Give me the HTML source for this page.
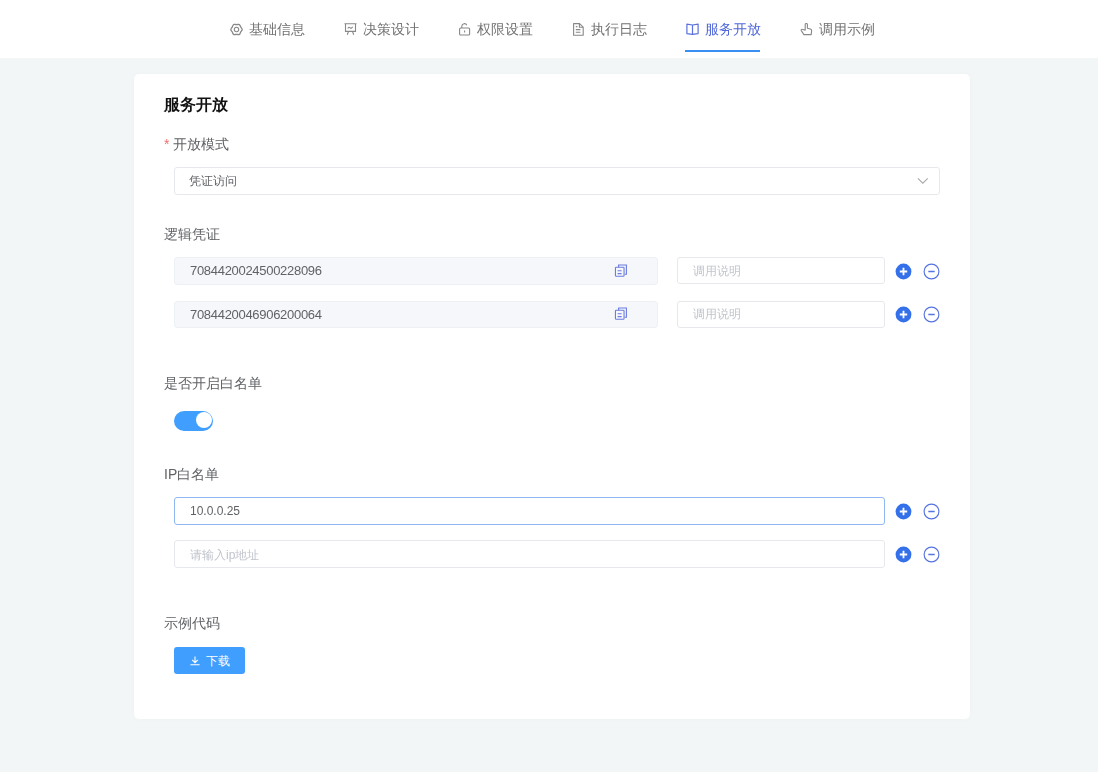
<!DOCTYPE html>
<html><head><meta charset="utf-8">
<style>
*{margin:0;padding:0;box-sizing:border-box}
html,body{width:1098px;height:772px;overflow:hidden;background:#f3f6f7;font-family:"Liberation Sans",sans-serif;}
.abs{position:absolute}
.lbl,.ttl,.inp,.tab,.btn{will-change:transform}
#hdr{position:absolute;left:0;top:0;width:1098px;height:58px;background:#fff}
.tab{position:absolute;top:20px;height:18px;line-height:18px;font-size:14px;color:#727272;white-space:nowrap}
.tab svg{position:absolute;left:0;top:3px}
.tab span{position:absolute;left:19px;top:0}
.tab.act{color:#5068d8}
#ul{position:absolute;left:685px;top:50px;width:75px;height:2px;background:#3b8ef2}
#card{position:absolute;left:134px;top:74px;width:836px;height:645px;background:#fff;border-radius:5px;box-shadow:0 0 6px rgba(0,0,0,0.025)}
.lbl{position:absolute;font-size:14px;line-height:16px;color:#606266;white-space:nowrap}
.ttl{position:absolute;font-size:15.5px;line-height:18px;color:#111;font-weight:bold;white-space:nowrap}
.inp{position:absolute;height:28px;border:1px solid #e6e8eb;border-radius:3px;background:#fff;font-size:12px;line-height:26px;color:#606266;padding-left:15px;white-space:nowrap}
.gray{background:#f5f7fa;border-color:#edf0f4}
.ph{color:#c0c4cc}
.num{font-size:13px;letter-spacing:-0.3px}
.circ{position:absolute}
</style></head><body>
<div id="hdr">
  <div class="tab" style="left:230px"><svg width="13" height="13" viewBox="0 0 13 13"><path d="M12.20 6.50 C12.20 7.32 11.22 8.13 10.74 8.95 C10.27 9.77 10.06 11.03 9.35 11.44 C8.64 11.84 7.45 11.40 6.50 11.40 C5.55 11.40 4.36 11.84 3.65 11.44 C2.94 11.03 2.73 9.77 2.26 8.95 C1.78 8.13 0.80 7.32 0.80 6.50 C0.80 5.68 1.78 4.87 2.26 4.05 C2.73 3.23 2.94 1.97 3.65 1.56 C4.36 1.16 5.55 1.60 6.50 1.60 C7.45 1.60 8.64 1.16 9.35 1.56 C10.06 1.97 10.27 3.23 10.74 4.05 C11.22 4.87 12.20 5.68 12.20 6.50Z" fill="none" stroke="#888" stroke-width="1.3" stroke-linejoin="round"/><circle cx="6.5" cy="6.5" r="2.2" fill="none" stroke="#888" stroke-width="1.1"/></svg><span>基础信息</span></div>
  <div class="tab" style="left:344px"><svg width="13" height="13" viewBox="0 0 13 13"><path d="M0.5 0.8h12M1.5 0.8v7.6h10V0.8M4.5 8.4l-1.2 3.3M8.5 8.4l1.2 3.3M3.8 5.6c0.8-1.6 1.6-1.6 2.4-0.8s1.6 0.4 2.4-1" fill="none" stroke="#888" stroke-width="1.1"/></svg><span>决策设计</span></div>
  <div class="tab" style="left:458px"><svg width="13" height="13" viewBox="0 0 13 13"><path d="M3.8 5V3.2a2.6 2.6 0 0 1 5-0.9" fill="none" stroke="#888" stroke-width="1.1"/><rect x="1.6" y="5" width="10" height="7" rx="1" fill="none" stroke="#888" stroke-width="1.1"/><path d="M6.6 7.5v2" stroke="#888" stroke-width="1.1"/></svg><span>权限设置</span></div>
  <div class="tab" style="left:572px"><svg width="13" height="13" viewBox="0 0 13 13"><path d="M1.6 0.6h6l3.6 3.6v8H1.6Z" fill="none" stroke="#888" stroke-width="1.1" stroke-linejoin="round"/><path d="M7.4 0.6v3.6h3.6M3.8 3.6h1.6M3.8 6.6h4.6M3.8 9.3h4.6" fill="none" stroke="#888" stroke-width="1.1"/></svg><span>执行日志</span></div>
  <div class="tab act" style="left:686px"><svg width="13" height="13" viewBox="0 0 13 13"><path d="M0.9 1.2 L6.5 2 L12.1 1.2 V10.6 L6.5 11.4 L0.9 10.6Z" fill="none" stroke="#5a70dc" stroke-width="1.2" stroke-linejoin="round"/><path d="M6.5 2v9.4" stroke="#5a70dc" stroke-width="1.2"/></svg><span>服务开放</span></div>
  <div class="tab" style="left:800px"><svg width="13" height="13" viewBox="0 0 13 13"><path d="M5.2 7.2V1.6a1.1 1.1 0 0 1 2.2 0v3.6l3 0.8c0.9 0.3 1.3 0.9 1.2 1.8l-0.4 3.8H3.9L1.3 7.6c-0.4-0.7 0.2-1.6 1-1.3Z" fill="none" stroke="#888" stroke-width="1.1" stroke-linejoin="round"/></svg><span>调用示例</span></div>
  <div id="ul"></div>
</div>
<div id="card"></div>
<div class="ttl" style="left:164px;top:95.5px">服务开放</div>
<div class="lbl" style="left:164px;top:136px"><span style="color:#f56c6c">*</span> 开放模式</div>
<div class="inp" style="left:174px;top:167px;width:766px;padding-left:14px">凭证访问
  <svg class="abs" style="left:742px;top:9px" width="12" height="8" viewBox="0 0 12 8"><path d="M0.9 1.3 5.8 6.2 10.7 1.3" fill="none" stroke="#a8a8a8" stroke-width="1.05"/></svg></div>

<div class="lbl" style="left:164px;top:226px">逻辑凭证</div>
<div class="inp gray num" style="left:174px;top:257px;width:484px">7084420024500228096</div>
<div class="inp ph" style="left:677px;top:257px;width:208px;height:27px;line-height:26px">调用说明</div>
<div class="inp gray num" style="left:174px;top:301px;width:484px;height:27px;line-height:25px">7084420046906200064</div>
<div class="inp ph" style="left:677px;top:301px;width:208px;height:27px;line-height:25px">调用说明</div>

<div class="lbl" style="left:164px;top:375px">是否开启白名单</div>
<div class="abs" style="left:174px;top:411px;width:39px;height:20px;border-radius:10px;background:#409eff"></div>
<div class="abs" style="left:196px;top:412px;width:16px;height:16px;border-radius:8px;background:#fff"></div>

<div class="lbl" style="left:164px;top:466px">IP白名单</div>
<div class="inp" style="left:174px;top:497px;width:711px;border-color:#8fb8f2">10.0.0.25</div>
<div class="inp ph" style="left:174px;top:540px;width:711px;height:28px;line-height:26px;padding-top:1px">请输入ip地址</div>

<div class="lbl" style="left:164px;top:615px">示例代码</div>
<div class="abs" style="left:174px;top:647px;width:71px;height:27px;border-radius:3px;background:#409eff;color:#fff;font-size:12px;line-height:27px;white-space:nowrap">
  <svg class="abs" style="left:16px;top:9px" width="10" height="10" viewBox="0 0 10 10"><path d="M5 0.5v6M2.2 3.8 5 6.6 7.8 3.8M0.4 8.8h9.2" fill="none" stroke="#fff" stroke-width="1.1"/></svg>
  <span class="abs" style="left:32px;top:0.8px">下载</span></div>
<svg class="abs" style="left:895px;top:262.5px" width="17" height="17" viewBox="0 0 17 17"><circle cx="8.5" cy="8.5" r="7.9" fill="#3470ea"/><path d="M8.5 4.8v7.4M4.8 8.5h7.4" stroke="#fff" stroke-width="1.8"/></svg>
<svg class="abs" style="left:923px;top:262.5px" width="17" height="17" viewBox="0 0 17 17"><circle cx="8.5" cy="8.5" r="7.4" fill="none" stroke="#5673e0" stroke-width="1.15"/><path d="M5.3 8.5h6.4" stroke="#5673e0" stroke-width="1.5"/></svg>
<svg class="abs" style="left:895px;top:305.5px" width="17" height="17" viewBox="0 0 17 17"><circle cx="8.5" cy="8.5" r="7.9" fill="#3470ea"/><path d="M8.5 4.8v7.4M4.8 8.5h7.4" stroke="#fff" stroke-width="1.8"/></svg>
<svg class="abs" style="left:923px;top:305.5px" width="17" height="17" viewBox="0 0 17 17"><circle cx="8.5" cy="8.5" r="7.4" fill="none" stroke="#5673e0" stroke-width="1.15"/><path d="M5.3 8.5h6.4" stroke="#5673e0" stroke-width="1.5"/></svg>
<svg class="abs" style="left:895px;top:502.5px" width="17" height="17" viewBox="0 0 17 17"><circle cx="8.5" cy="8.5" r="7.9" fill="#3470ea"/><path d="M8.5 4.8v7.4M4.8 8.5h7.4" stroke="#fff" stroke-width="1.8"/></svg>
<svg class="abs" style="left:923px;top:502.5px" width="17" height="17" viewBox="0 0 17 17"><circle cx="8.5" cy="8.5" r="7.4" fill="none" stroke="#5673e0" stroke-width="1.15"/><path d="M5.3 8.5h6.4" stroke="#5673e0" stroke-width="1.5"/></svg>
<svg class="abs" style="left:895px;top:545.5px" width="17" height="17" viewBox="0 0 17 17"><circle cx="8.5" cy="8.5" r="7.9" fill="#3470ea"/><path d="M8.5 4.8v7.4M4.8 8.5h7.4" stroke="#fff" stroke-width="1.8"/></svg>
<svg class="abs" style="left:923px;top:545.5px" width="17" height="17" viewBox="0 0 17 17"><circle cx="8.5" cy="8.5" r="7.4" fill="none" stroke="#5673e0" stroke-width="1.15"/><path d="M5.3 8.5h6.4" stroke="#5673e0" stroke-width="1.5"/></svg>
<svg class="abs" style="left:614px;top:264px" width="14" height="14" viewBox="0 0 14 14"><path d="M4.6 3.2V1H12.4V10.3H10.6" fill="none" stroke="#6b7ce0" stroke-width="1.1"/><rect x="1.45" y="3.3" width="8.6" height="8.9" rx="0.8" fill="none" stroke="#6b7ce0" stroke-width="1.1"/><path d="M3.6 6.7h4M3.6 9.6h4" stroke="#6b7ce0" stroke-width="1.1"/></svg>
<svg class="abs" style="left:614px;top:307px" width="14" height="14" viewBox="0 0 14 14"><path d="M4.6 3.2V1H12.4V10.3H10.6" fill="none" stroke="#6b7ce0" stroke-width="1.1"/><rect x="1.45" y="3.3" width="8.6" height="8.9" rx="0.8" fill="none" stroke="#6b7ce0" stroke-width="1.1"/><path d="M3.6 6.7h4M3.6 9.6h4" stroke="#6b7ce0" stroke-width="1.1"/></svg>
</body></html>
